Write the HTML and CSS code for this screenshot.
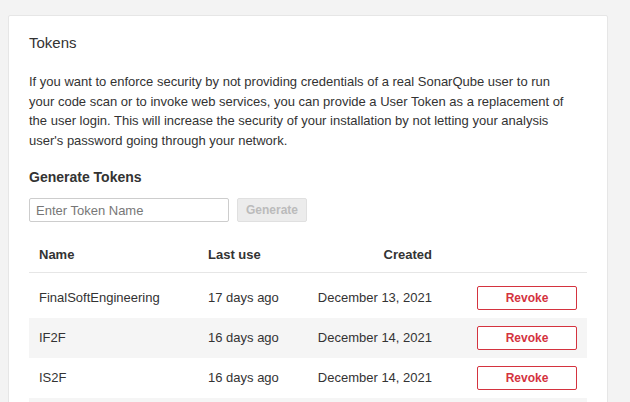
FILE: index.html
```html
<!DOCTYPE html>
<html>
<head>
<meta charset="utf-8">
<link rel="stylesheet" href="styles.css">
</head>
<body>
<div class="page">
  <section class="card">
    <h2 class="card-title">Tokens</h2>
    <p class="intro">If you want to enforce security by not providing credentials of a real SonarQube user to run your code scan or to invoke web services, you can provide a User Token as a replacement of the user login. This will increase the security of your installation by not letting your analysis user's password going through your network.</p>
    <h3 class="sub-title">Generate Tokens</h3>
    <form class="gen-form">
      <input class="token-input" type="text" placeholder="Enter Token Name">
      <button class="gen-btn" type="button" disabled>Generate</button>
    </form>
    <table class="data">
      <colgroup>
        <col class="c-name"><col class="c-last"><col class="c-created"><col class="c-action">
      </colgroup>
      <thead>
        <tr>
          <th>Name</th>
          <th>Last use</th>
          <th class="right">Created</th>
          <th></th>
        </tr>
      </thead>
      <tbody>
        <tr class="spacer"><td colspan="4"></td></tr>
        <tr>
          <td>FinalSoftEngineering</td>
          <td>17 days ago</td>
          <td class="right">December 13, 2021</td>
          <td class="right"><button class="revoke" type="button">Revoke</button></td>
        </tr>
        <tr class="alt">
          <td>IF2F</td>
          <td>16 days ago</td>
          <td class="right">December 14, 2021</td>
          <td class="right"><button class="revoke" type="button">Revoke</button></td>
        </tr>
        <tr>
          <td>IS2F</td>
          <td>16 days ago</td>
          <td class="right">December 14, 2021</td>
          <td class="right"><button class="revoke" type="button">Revoke</button></td>
        </tr>
        <tr class="alt">
          <td></td>
          <td></td>
          <td></td>
          <td></td>
        </tr>
      </tbody>
    </table>
  </section>
</div>
</body>
</html>
```
FILE: styles.css
```css
html, body {
  margin: 0;
  padding: 0;
  background: #f3f3f3;
  font-family: "Liberation Sans", Arial, sans-serif;
  color: #333;
  font-size: 13px;
}
.page {
  padding: 15px 0 0 8px;
  height: 387px;
  overflow: hidden;
}
.card {
  box-sizing: border-box;
  width: 600px;
  background: #fff;
  border: 1px solid #e6e6e6;
  border-radius: 2px;
  padding: 15px 20px 0 20px;
  min-height: 420px;
}
.card-title {
  margin: 0;
  font-size: 15px;
  font-weight: 400;
  line-height: 24px;
  color: #333;
}
.intro {
  margin: 17px 0 0 0;
  width: 545px;
  line-height: 19.5px;
  color: #333;
}
.sub-title {
  margin: 17px 0 0 0;
  font-size: 14px;
  font-weight: 700;
  line-height: 20px;
  color: #333;
}
.gen-form {
  display: flex;
  gap: 8px;
  margin: 11px 0 0 0;
}
.token-input {
  box-sizing: border-box;
  width: 200px;
  height: 24px;
  border: 1px solid #cdcdcd;
  border-radius: 2px;
  padding: 0 6px;
  font-family: inherit;
  font-size: 13px;
  color: #333;
}
.token-input::placeholder {
  color: #777;
}
.gen-btn {
  box-sizing: border-box;
  height: 24px;
  width: 70px;
  padding: 0;
  border: 1px solid #e0e0e0;
  background: #ececec;
  color: #bbb;
  font-family: inherit;
  font-size: 12px;
  font-weight: 700;
  border-radius: 2px;
}
.data {
  width: 558px;
  margin-top: 15px;
  border-collapse: collapse;
  table-layout: fixed;
}
.c-name { width: 169px; }
.c-last { width: 100px; }
.c-created { width: 144px; }
.c-action { width: 145px; }
.data th {
  text-align: left;
  font-weight: 700;
  height: 35px;
  padding: 0 10px;
  border-bottom: 1px solid #e6e6e6;
  vertical-align: middle;
}
.data td {
  height: 38px;
  padding: 0 10px 2px 10px;
  vertical-align: middle;
}
.data td.right:last-child {
  padding-bottom: 0;
  height: 40px;
}
.data .spacer td {
  height: 5px;
  padding: 0;
}
.data .right {
  text-align: right;
}
.data tr.alt td {
  background: #f5f5f5;
}
.revoke {
  box-sizing: border-box;
  width: 100px;
  height: 24px;
  border: 1px solid #d4333f;
  border-radius: 2px;
  background: #fff;
  color: #d4333f;
  font-family: inherit;
  font-size: 12px;
  font-weight: 700;
  padding: 0;
  vertical-align: middle;
}
```
